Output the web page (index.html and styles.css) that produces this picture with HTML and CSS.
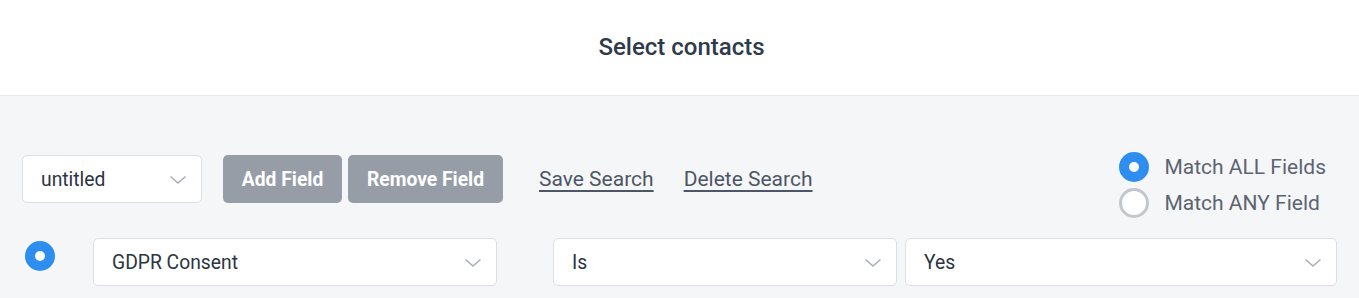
FILE: index.html
```html
<!DOCTYPE html>
<html>
<head>
<meta charset="utf-8">
<link rel="stylesheet" href="styles.css">
</head>
<body>
<header class="header">
  <h1 class="title">Select contacts</h1>
</header>
<main class="main">
  <div class="row-top">
    <div class="toolbar">
      <div class="select select-name">
        <span class="select-text">untitled</span>
        <svg class="chev" width="18" height="10" viewBox="0 0 18 10"><path d="M1.5 1.5 L9 8 L16.5 1.5" fill="none" stroke="#a7adb5" stroke-width="1.5"/></svg>
      </div>
      <div class="btns">
        <button class="btn btn-add">Add Field</button>
        <button class="btn btn-remove">Remove Field</button>
      </div>
      <a class="link link-save" href="#">Save Search</a>
      <a class="link link-delete" href="#">Delete Search</a>
    </div>
    <div class="match">
      <label class="match-item"><span class="radio radio-on"></span><span class="match-text">Match ALL Fields</span></label>
      <label class="match-item"><span class="radio radio-off"></span><span class="match-text">Match ANY Field</span></label>
    </div>
  </div>
  <div class="row-field">
    <span class="radio radio-on radio-row"></span>
    <div class="select select-field">
      <span class="select-text">GDPR Consent</span>
      <svg class="chev" width="18" height="10" viewBox="0 0 18 10"><path d="M1.5 1.5 L9 8 L16.5 1.5" fill="none" stroke="#a7adb5" stroke-width="1.5"/></svg>
    </div>
    <div class="select select-op">
      <span class="select-text">Is</span>
      <svg class="chev" width="18" height="10" viewBox="0 0 18 10"><path d="M1.5 1.5 L9 8 L16.5 1.5" fill="none" stroke="#a7adb5" stroke-width="1.5"/></svg>
    </div>
    <div class="select select-value">
      <span class="select-text">Yes</span>
      <svg class="chev" width="18" height="10" viewBox="0 0 18 10"><path d="M1.5 1.5 L9 8 L16.5 1.5" fill="none" stroke="#a7adb5" stroke-width="1.5"/></svg>
    </div>
  </div>
</main>
</body>
</html>
```

FILE: styles.css
```css
* { box-sizing: border-box; }
html, body { margin: 0; padding: 0; }
body {
  font-family: Roboto, "Liberation Sans", Arial, sans-serif;
  background: #f5f6f8;
  width: 1359px;
  height: 298px;
  overflow: hidden;
}
.header {
  height: 96px;
  background: #ffffff;
  border-bottom: 1px solid #e6e8eb;
  display: flex;
  align-items: center;
  justify-content: center;
}
.title {
  margin: 0;
  font-size: 24px;
  font-weight: 500;
  color: #2f3a4b;
  padding-left: 4px;
  padding-bottom: 2px;
}
.main {
  padding: 56px 22px 0 22px;
}
.row-top {
  display: flex;
  justify-content: space-between;
  align-items: flex-start;
}
.toolbar {
  display: flex;
  align-items: center;
  margin-top: 3px;
}
.select {
  height: 48px;
  background: #ffffff;
  border: 1px solid #dcdfe3;
  border-radius: 5px;
  display: flex;
  align-items: center;
  justify-content: space-between;
  padding: 0 14px 0 18px;
}
.select-text {
  font-size: 19.3px;
  color: #2b3441;
}
.chev { display: block; margin-top: 1px; }
.select-name { width: 180px; }
.btns {
  display: flex;
  gap: 6px;
  margin-left: 21px;
}
.btn {
  height: 48px;
  border: none;
  border-radius: 5px;
  background: #979da7;
  color: #ffffff;
  font-family: inherit;
  font-size: 19.3px;
  font-weight: 700;
  padding: 0;
}
.btn-add { width: 119px; }
.btn-remove { width: 155px; }
.link {
  font-size: 21px;
  color: #4d5666;
  text-decoration: underline;
  text-underline-offset: 4px;
  text-decoration-thickness: 2px;
}
.link-save { margin-left: 36px; }
.link-delete { margin-left: 30px; }
.match {
  display: flex;
  flex-direction: column;
  gap: 6px;
  margin-right: 11px;
}
.match-item {
  display: flex;
  align-items: center;
  height: 30px;
  gap: 15px;
}
.match-text {
  font-size: 21px;
  color: #5d6471;
}
.radio {
  display: block;
  width: 30px;
  height: 30px;
  border-radius: 50%;
  flex: none;
}
.radio-on {
  background: #ffffff;
  border: 10px solid #2e8ef0;
}
.radio-off {
  background: #ffffff;
  border: 3px solid #c3c7cc;
}
.row-field {
  display: flex;
  align-items: flex-start;
  margin-top: 20px;
}
.radio-row {
  margin-left: 3px;
  margin-top: 3px;
}
.select-field { width: 405px; margin-left: 38px; }
.select-op { width: 345px; margin-left: 56px; }
.select-value { width: 433px; margin-left: 8px; }
```
